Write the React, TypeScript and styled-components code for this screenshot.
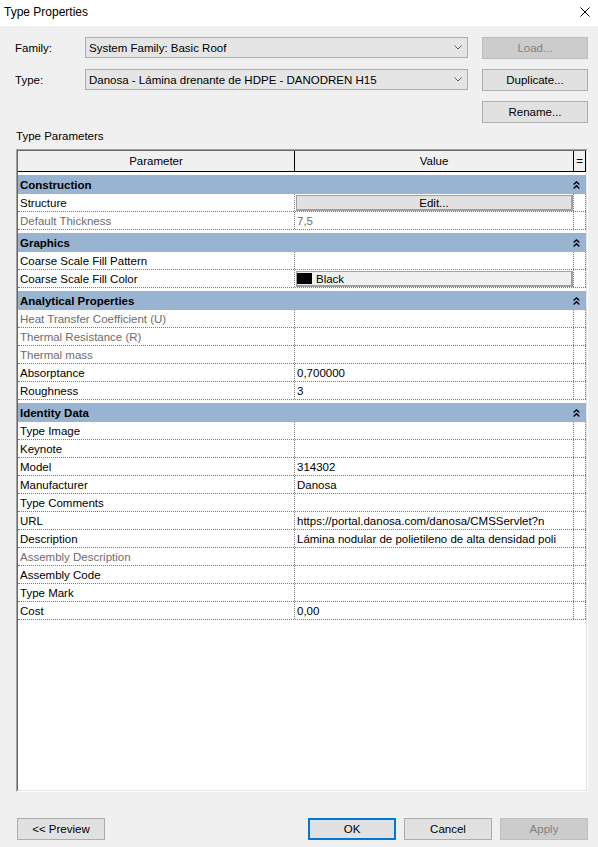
import React from "react";
import styled, { createGlobalStyle } from "styled-components";

const GlobalStyle = createGlobalStyle`
  html, body {
    margin: 0;
    padding: 0;
  }
  body {
    background: #f0f0f0;
    font-family: "Segoe UI", "Liberation Sans", Arial, sans-serif;
    font-size: 11.5px;
    color: #000;
  }
`;

const Window = styled.div`
  width: 598px;
  height: 847px;
  display: flex;
  flex-direction: column;
  background: #f0f0f0;
  overflow: hidden;
`;

const TitleBar = styled.div`
  height: 26px;
  background: #fff;
  display: flex;
  align-items: center;
  justify-content: space-between;
  padding: 0 8px 3px 4px;
  box-sizing: border-box;
  font-size: 12px;
`;

const Body = styled.div`
  flex: 1;
  display: flex;
  flex-direction: column;
  padding: 11px 10px 0 15px;
`;

const TopGrid = styled.div`
  display: grid;
  grid-template-columns: 56px 383px 106px;
  grid-template-rows: 22px 22px 22px;
  column-gap: 14px;
  row-gap: 10px;
  align-items: center;
`;

const FieldLabel = styled.div`
  grid-column: 1;
`;

const Combo = styled.div`
  grid-column: 2;
  height: 21px;
  box-sizing: border-box;
  border: 1px solid #adadad;
  background: #e5e5e5;
  display: flex;
  align-items: center;
  justify-content: space-between;
  padding: 0 5px 0 3px;
  align-self: start;
`;

const Button = styled.button<{ $variant?: "default" | "primary" | "disabled" }>`
  height: 22px;
  width: 88px;
  box-sizing: border-box;
  font: inherit;
  padding: 0;
  background: ${(p) => (p.$variant === "disabled" ? "#cccccc" : "#e1e1e1")};
  color: ${(p) => (p.$variant === "disabled" ? "#838383" : "#000")};
  border: ${(p) =>
    p.$variant === "primary"
      ? "2px solid #0078d7"
      : p.$variant === "disabled"
      ? "1px solid #bfbfbf"
      : "1px solid #adadad"};
`;

const SideButton = styled(Button)`
  width: 106px;
  grid-column: 3;
`;

const SectionLabel = styled.div`
  margin-top: 5px;
  margin-left: 1px;
  line-height: 16px;
`;

const Table = styled.div`
  margin: 5px 0 0 1px;
  width: 572px;
  height: 643px;
  box-sizing: border-box;
  border: 1px solid;
  border-color: #a0a0a0 #ffffff #ffffff #a0a0a0;
`;

const TableInner = styled.div`
  height: 100%;
  box-sizing: border-box;
  border: 1px solid;
  border-color: #696969 #e3e3e3 #e3e3e3 #696969;
  background: #fff;
  overflow: hidden;
`;

const Columns = `
  display: grid;
  grid-template-columns: 277px 279px 12px;
`;

const HeaderRow = styled.div`
  ${Columns}
  height: 21px;
`;

const HeaderCell = styled.div`
  background: #f0f0f0;
  border-right: 1px solid #000;
  border-bottom: 1px solid #000;
  display: flex;
  align-items: center;
  justify-content: center;
`;

const Group = styled.div`
  margin-top: 3px;
`;

const GroupHeader = styled.div`
  height: 19px;
  background: #99b4d1;
  display: flex;
  align-items: center;
  justify-content: space-between;
  padding: 0 6px 0 2px;
  font-weight: bold;
`;

const Row = styled.div`
  ${Columns}
  height: 18px;
  box-sizing: border-box;
  border-bottom: 1px dotted #7a7a7a;
`;

const Cell = styled.div<{ $muted?: boolean }>`
  border-right: 1px dotted #7a7a7a;
  padding-left: 2px;
  display: flex;
  align-items: center;
  white-space: nowrap;
  overflow: hidden;
  color: ${(p) => (p.$muted ? "#6d6d6d" : "#000")};
`;

const ValueCell = styled(Cell)`
  padding-left: 0;
  & > span {
    padding-left: 2px;
  }
`;

const CellButton = styled.div<{ $align?: "center" | "left" }>`
  margin: 1px 0 0 1px;
  flex: 1;
  height: 16px;
  align-self: flex-start;
  box-sizing: border-box;
  border: 1px solid #a0a0a0;
  border-right-width: 2px;
  border-bottom-width: 2px;
  background: ${(p) => (p.$align === "left" ? "#f0f0f0" : "#e1e1e1")};
  display: flex;
  align-items: center;
  justify-content: ${(p) => (p.$align === "left" ? "flex-start" : "center")};
  gap: 4px;
`;

const Swatch = styled.span`
  width: 15px;
  height: 11px;
  background: #000;
`;

const Footer = styled.div`
  margin-top: 26px;
  display: flex;
  justify-content: space-between;
  padding-left: 2px;
`;

const ButtonGroup = styled.div`
  display: flex;
  gap: 8px;
`;

const Close = () => (
  <svg width="10" height="10" viewBox="0 0 10 10">
    <path d="M0.5 0.5 L9.5 9.5 M9.5 0.5 L0.5 9.5" stroke="#000" strokeWidth="1" fill="none" />
  </svg>
);

const Chevron = () => (
  <svg width="8" height="5" viewBox="0 0 8 5">
    <path d="M0.5 0.5 L4 4 L7.5 0.5" stroke="#606060" strokeWidth="1" fill="none" />
  </svg>
);

const Collapse = () => (
  <svg width="7" height="8" viewBox="0 0 7 8">
    <path d="M0.6 3.6 L3.5 0.9 L6.4 3.6 M0.6 7.4 L3.5 4.7 L6.4 7.4" stroke="#000" strokeWidth="1.3" fill="none" />
  </svg>
);

type Param = {
  name: string;
  value?: string;
  muted?: boolean;
  kind?: "edit" | "color";
};

const groups: { title: string; params: Param[] }[] = [
  {
    title: "Construction",
    params: [
      { name: "Structure", kind: "edit" },
      { name: "Default Thickness", value: "7,5", muted: true },
    ],
  },
  {
    title: "Graphics",
    params: [
      { name: "Coarse Scale Fill Pattern" },
      { name: "Coarse Scale Fill Color", kind: "color" },
    ],
  },
  {
    title: "Analytical Properties",
    params: [
      { name: "Heat Transfer Coefficient (U)", muted: true },
      { name: "Thermal Resistance (R)", muted: true },
      { name: "Thermal mass", muted: true },
      { name: "Absorptance", value: "0,700000" },
      { name: "Roughness", value: "3" },
    ],
  },
  {
    title: "Identity Data",
    params: [
      { name: "Type Image" },
      { name: "Keynote" },
      { name: "Model", value: "314302" },
      { name: "Manufacturer", value: "Danosa" },
      { name: "Type Comments" },
      { name: "URL", value: "https://portal.danosa.com/danosa/CMSServlet?n" },
      { name: "Description", value: "Lámina nodular de polietileno de alta densidad poli" },
      { name: "Assembly Description", muted: true },
      { name: "Assembly Code" },
      { name: "Type Mark" },
      { name: "Cost", value: "0,00" },
    ],
  },
];

function ParamRow({ p }: { p: Param }) {
  return (
    <Row>
      <Cell $muted={p.muted}>{p.name}</Cell>
      <ValueCell $muted={p.muted}>
        {p.kind === "edit" && <CellButton>Edit...</CellButton>}
        {p.kind === "color" && (
          <CellButton $align="left">
            <Swatch />
            Black
          </CellButton>
        )}
        {p.value && <span>{p.value}</span>}
      </ValueCell>
      <Cell />
    </Row>
  );
}

export default function App() {
  return (
    <>
      <GlobalStyle />
      <Window>
        <TitleBar>
          <span>Type Properties</span>
          <Close />
        </TitleBar>
        <Body>
          <TopGrid>
            <FieldLabel>Family:</FieldLabel>
            <Combo>
              <span>System Family: Basic Roof</span>
              <Chevron />
            </Combo>
            <SideButton $variant="disabled">Load...</SideButton>

            <FieldLabel>Type:</FieldLabel>
            <Combo>
              <span>Danosa - Lámina drenante de HDPE - DANODREN H15</span>
              <Chevron />
            </Combo>
            <SideButton>Duplicate...</SideButton>

            <SideButton>Rename...</SideButton>
          </TopGrid>

          <SectionLabel>Type Parameters</SectionLabel>
          <Table>
            <TableInner>
              <HeaderRow>
                <HeaderCell>Parameter</HeaderCell>
                <HeaderCell>Value</HeaderCell>
                <HeaderCell>=</HeaderCell>
              </HeaderRow>
              {groups.map((g) => (
                <Group key={g.title}>
                  <GroupHeader>
                    <span>{g.title}</span>
                    <Collapse />
                  </GroupHeader>
                  {g.params.map((p) => (
                    <ParamRow key={p.name} p={p} />
                  ))}
                </Group>
              ))}
            </TableInner>
          </Table>

          <Footer>
            <Button>&lt;&lt; Preview</Button>
            <ButtonGroup>
              <Button $variant="primary">OK</Button>
              <Button>Cancel</Button>
              <Button $variant="disabled">Apply</Button>
            </ButtonGroup>
          </Footer>
        </Body>
      </Window>
    </>
  );
}
